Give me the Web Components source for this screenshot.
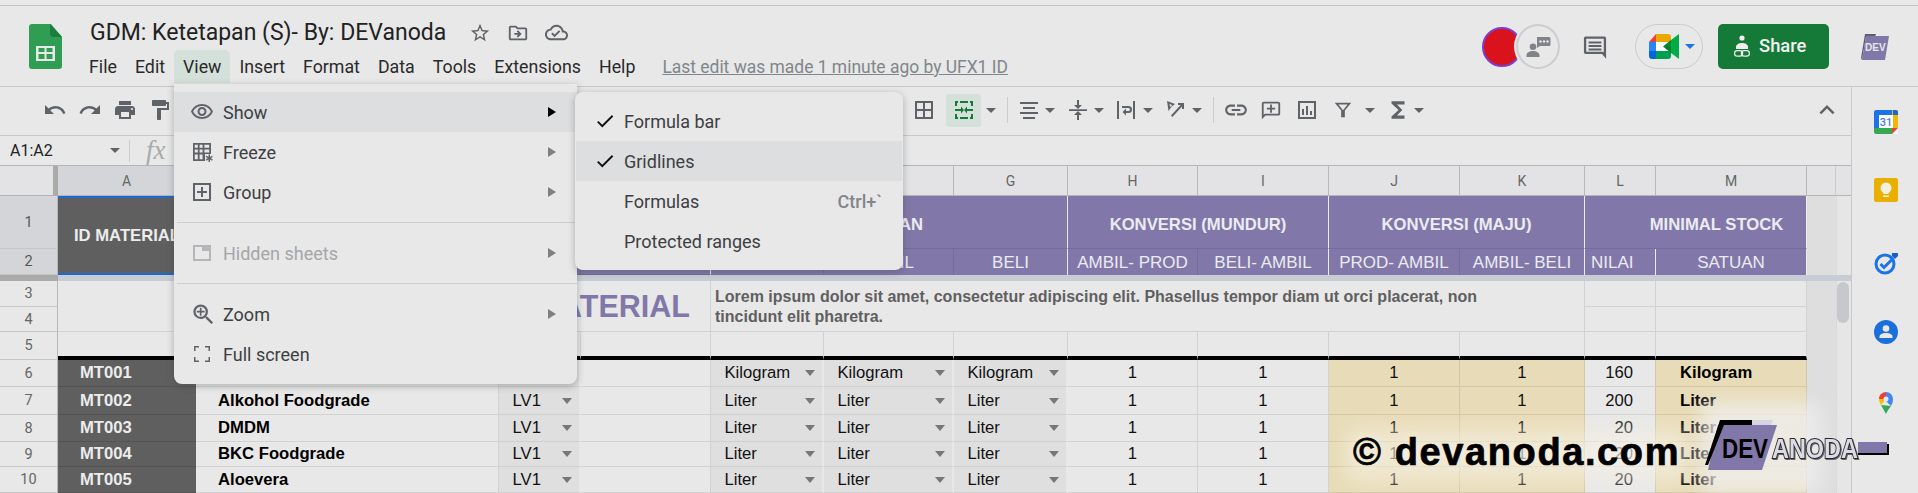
<!DOCTYPE html>
<html><head><meta charset="utf-8"><title>GDM</title>
<style>
html,body{margin:0;padding:0;background:#e8e8e8;width:1918px;height:493px;overflow:hidden;font-family:Roboto,"Liberation Sans",sans-serif}
body{position:relative}
.main{display:flex;align-items:stretch}
.col{width:1851px;display:flex;flex-direction:column}
</style></head><body>
<gs-titlebar></gs-titlebar>
<div class="main"><div class="col"><gs-toolbar></gs-toolbar><gs-formula></gs-formula><gs-sheet></gs-sheet></div><gs-side></gs-side></div>
<gs-menu id="m1" style="left:174px;top:84px;width:403px"></gs-menu>
<gs-submenu style="left:575px;top:92px;width:328px"></gs-submenu>
<gs-watermark></gs-watermark>
<script>
const P={
undo:'M12.5 8c-2.65 0-5.05.99-6.9 2.6L2 7v9h9l-3.62-3.62c1.39-1.16 3.16-1.88 5.12-1.88 3.54 0 6.55 2.31 7.6 5.5l2.37-.78C21.08 11.03 17.15 8 12.5 8z',
redo:'M18.4 10.6C16.55 8.99 14.15 8 11.5 8c-4.65 0-8.58 3.03-9.96 7.22L3.9 16c1.05-3.19 4.05-5.5 7.6-5.5 1.95 0 3.73.72 5.12 1.88L13 16h9V7l-3.6 3.6z',
print:'M19 8H5c-1.66 0-3 1.34-3 3v6h4v4h12v-4h4v-6c0-1.66-1.34-3-3-3zm-3 11H8v-5h8v5zm3-7c-.55 0-1-.45-1-1s.45-1 1-1 1 .45 1 1-.45 1-1 1zm-1-9H6v4h12V3z',
paint:'M18 4V3c0-.55-.45-1-1-1H5c-.55 0-1 .45-1 1v4c0 .55.45 1 1 1h12c.55 0 1-.45 1-1V6h1v4H9v11c0 .55.45 1 1 1h2c.55 0 1-.45 1-1v-9h8V4h-3z',
eye:'M12 6c3.79 0 7.17 2.13 8.82 5.5C19.17 14.87 15.79 17 12 17s-7.17-2.13-8.82-5.5C4.83 8.13 8.21 6 12 6m0-2C7 4 2.73 7.11 1 11.5 2.73 15.89 7 19 12 19s9.27-3.11 11-7.5C21.27 7.11 17 4 12 4zm0 5c1.38 0 2.5 1.12 2.5 2.5S13.38 14 12 14s-2.5-1.12-2.5-2.5S10.62 9 12 9m0-2c-2.48 0-4.5 2.02-4.5 4.5S9.52 16 12 16s4.5-2.02 4.5-4.5S14.48 7 12 7z',
star:'M22 9.24l-7.19-.62L12 2 9.19 8.63 2 9.24l5.46 4.73L5.82 21 12 17.27 18.18 21l-1.63-7.03L22 9.24zM12 15.4l-3.76 2.27 1-4.28-3.32-2.88 4.38-.38L12 6.1l1.71 4.04 4.38.38-3.32 2.88 1 4.28L12 15.4z',
move:'M20 6h-8l-2-2H4c-1.1 0-1.99.9-1.99 2L2 18c0 1.1.9 2 2 2h16c1.1 0 2-.9 2-2V8c0-1.1-.9-2-2-2zm0 12H4V6h5.17l2 2H20v10zM12.16 12l-1.59-1.59L12 9l4 4-4 4-1.41-1.41L12.16 14H8v-2z',
cloud:'M19.35 10.04C18.67 6.59 15.64 4 12 4 9.11 4 6.6 5.64 5.35 8.04 2.34 8.36 0 10.91 0 14c0 3.31 2.69 6 6 6h13c2.76 0 5-2.24 5-5 0-2.64-2.05-4.78-4.65-4.96zM19 18H6c-2.21 0-4-1.79-4-4 0-2.05 1.53-3.76 3.56-3.97l1.07-.11.5-.95C8.08 7.14 9.94 6 12 6c2.62 0 4.88 1.86 5.39 4.43l.3 1.5 1.53.11c1.56.1 2.78 1.41 2.78 2.96 0 1.65-1.35 3-3 3zm-9-3.82l-2.09-2.09L6.5 13.5 10 17l6.01-6.01-1.41-1.41z',
zoom:'M15.5 14h-.79l-.28-.27A6.471 6.471 0 0 0 16 9.5 6.5 6.5 0 1 0 9.5 16c1.61 0 3.09-.59 4.23-1.57l.27.28v.79l5 4.99L20.49 19l-4.99-5zm-6 0C7.01 14 5 11.99 5 9.5S7.01 5 9.5 5 14 7.01 14 9.5 11.99 14 9.5 14zM8.750 6h1.500v2.750H13v1.500h-2.750V13h-1.500v-2.750H6v-1.500h2.750z',
full:'M4 9V4h5v1.5H5.5V9zM15 4h5v5h-1.5V5.5H15zM4 15h1.5v3.5H9V20H4zM18.5 15H20v5h-5v-1.5h3.5z',
check:'M9 16.17L4.83 12l-1.42 1.41L9 19 21 7l-1.41-1.41z',
sigma:'M18 4H6v2l6.5 6L6 18v2h12v-3h-7l5-5-5-5h7z',
link:'M3.9 12c0-1.71 1.39-3.1 3.1-3.1h4V7H7c-2.76 0-5 2.24-5 5s2.24 5 5 5h4v-1.9H7c-1.71 0-3.1-1.39-3.1-3.1zM8 13h8v-2H8v2zm9-6h-4v1.9h4c1.71 0 3.1 1.39 3.1 3.1s-1.39 3.1-3.1 3.1h-4V17h4c2.76 0 5-2.24 5-5s-2.24-5-5-5z',
up:'M12 8l-6 6 1.41 1.41L12 10.83l4.59 4.58L18 14z',
grid:'M3 3v18h18V3H3zm8 16H5v-6h6v6zm0-8H5V5h6v6zm8 8h-6v-6h6v6zm0-8h-6V5h6v6z',
merge:'M3 3h3v2H5v3H3zM3 16h2v3h1v2H3zM18 3h3v5h-2V5h-1zM19 16h2v5h-3v-2h1zM8 3h8v2H8zM8 19h8v2H8zM3 11h6V8.5l3 3.5-3 3.5V13H3zM21 11h-6V8.5L12 12l3 3.5V13h6z',
align:'M3 4h18v2H3zM6 9h12v2H6zM3 14h18v2H3zM6 19h12v2H6z',
valign:'M11 2h2v5h3l-4 4-4-4h3zM3 11.2h18v1.7H3zM12 13l4 4h-3v5h-2v-5H8z',
wrap:'M3 3h2v18H3zM19 3h2v18h-2zM8 8h6.5a3.2 3.2 0 0 1 0 7H12v2.5L8.5 14 12 10.5V13h2.5a1.2 1.2 0 0 0 0-3H8z',
rotate:'M4 3l8 3-3.5 2.7L5.5 13zM6.6 5.7L7 9l2.3-1.8zM21 5v6h-2V8.4L9.4 19 8 17.6 17.6 7H15V5z',
addc:'M20 3H4a2 2 0 0 0-2 2v17l4-4h14a2 2 0 0 0 2-2V5a2 2 0 0 0-2-2zm0 13H5.2L4 17.2V5h16zM11 6h2v3.5h3.5v2H13V15h-2v-3.5H7.5v-2H11z',
chart:'M3 3h18v18H3zm2 2v14h14V5zM7 11h2v6H7zM11 8h2v9h-2zM15 13h2v4h-2z',
filter:'M3 4h18l-7 8.5V20h-4v-7.500zM7 6l5 6.200L17 6z',
comment:'M4 3h16a1.500 1.500 0 0 1 1.500 1.500V22L18 18H4a1.500 1.500 0 0 1-1.500-1.500v-12A1.500 1.500 0 0 1 4 3zm.500 2v11h14.300l.700.700V5zM6.500 7.200h11v1.800h-11zM6.500 10.200h11V12h-11zM6.500 13.200h11V15h-11z',
freeze:'M3 3h18v11h-6v7H3zM4.800 4.800v3h3v-3zM9.600 4.800v3h3v-3zM14.400 4.800v3h4.800v-3zM4.800 9.600v3h3v-3zM9.600 9.600v3h3v-3zM14.400 9.600v3h4.800v-3zM4.800 14.400v4.800h3v-4.800zM9.600 14.400v4.800h3v-4.800z',
freeze2:'M18.500 14.500h1.500v2.400l2-1.200.800 1.300-2.100 1.200 2.100 1.200-.800 1.300-2-1.200V22h-1.500v-2.500l-2 1.200-.800-1.300 2.100-1.200-2.100-1.200.800-1.300 2 1.200z',
group:'M3 3h18v18H3zm2 2v14h14V5zM11 7h2v4h4v2h-4v4h-2v-4H7v-2h4z',
hidden:'M3 4h18v16H3zm2 2v12h14v-8h-7V6z'
};
const ic=(n,s=24,c='#5f6368',extra='')=>`<svg width="${s}" height="${s}" viewBox="0 0 24 24" fill="${c}" style="display:block;flex:none;${extra}"><path fill-rule="evenodd" d="${P[n]}"/>${n==='freeze'?`<path d="${P.freeze2}"/>`:''}</svg>`;
const mk=(name,css,html)=>customElements.define(name,class extends HTMLElement{constructor(){super();const r=this.attachShadow({mode:'open'});r.innerHTML=`<style>${css}</style>${typeof html==='function'?html(this):html}`;}});

mk('gs-titlebar',`
:host{display:flex;box-sizing:border-box;height:82px;margin-top:5px;border-top:1px solid #c4c4c4;border-bottom:1px solid #c9c9c9;color:#1f1f1f;font-family:Roboto,sans-serif}
.logo{margin:18px 0 0 29px;flex:none}
.doc{margin-left:28px;width:960px;flex:none}
.t{display:flex;align-items:center;height:25px;margin-top:14px}
.t b{font-weight:400;font-size:23px;color:#222;white-space:nowrap;width:379px;flex:none}
.t svg{margin-right:16px}
.m{display:flex;align-items:center;height:33px;margin-top:5px;font-size:17.800px;color:#2a2a2a;margin-left:-10px}
.m span{padding:0 9px;height:33px;line-height:33px;white-space:nowrap;border-radius:5px 5px 0 0}
.m .on{background:#d3e1da}
.m u{margin-left:18px;color:#80868b;font-size:17.450px;white-space:nowrap}
.r{margin-left:auto;display:flex;align-items:center;padding-right:29px;height:45px;margin-top:18px}
.av{border-radius:50%;background:#d9121c;border:2px solid #7b3fd0;box-sizing:border-box;width:40px;height:40px}
.pres{margin-left:-6px;border-radius:50%;border:2px solid #ccccd2;background:#e8e8e8;box-shadow:0 0 0 2px #e8e8e8;display:flex;align-items:center;justify-content:center;box-sizing:border-box;width:44px;height:45px}
.meet{width:68px;height:45px;margin-left:26px;border:1px solid #ccc;border-radius:23px;box-sizing:border-box;display:flex;align-items:center;padding-left:13px}
.share{margin-left:15px;width:111px;height:45px;background:#157a38;border-radius:5px;color:#f1f1f1;font-size:18.400px;font-weight:500;display:flex;align-items:center;gap:9px;padding:0 0 2px 16px;box-sizing:border-box}
.dev{margin-left:32px}
`,`
<svg class="logo" width="33" height="45" viewBox="0 0 33 45"><path d="M3 0h19l11 13v29a3 3 0 0 1-3 3H3a3 3 0 0 1-3-3V3a3 3 0 0 1 3-3z" fill="#2f9e52"/><path d="M21 0l12 13H24a3 3 0 0 1-3-3z" fill="#1d7d3f"/><path fill="#e8e8e8" fill-rule="evenodd" d="M7 22h19v15H7zm2.500 2v4h6v-4zm8 0v4h6v-4zm-8 6v5h6v-5zm8 0v5h6v-5z"/></svg>
<div class="doc"><div class="t"><b>GDM: Ketetapan (S)- By: DEVanoda</b>${ic('star',22,'#5f6368')}${ic('move',22,'#5f6368')}${ic('cloud',23,'#5f6368')}</div>
<div class="m"><span>File</span><span>Edit</span><span class="on">View</span><span>Insert</span><span>Format</span><span>Data</span><span>Tools</span><span>Extensions</span><span>Help</span><u>Last edit was made 1 minute ago by UFX1 ID</u></div></div>
<div class="r"><div class="av"></div><div class="pres"><svg width="28" height="26" viewBox="0 0 28 26"><path fill="#808488" d="M9 9.500a3.300 3.300 0 1 1 0 6.600 3.300 3.300 0 0 1 0-6.600zM2.500 23v-1.500c0-3 3-4.500 6.500-4.500s6.500 1.500 6.500 4.500V23z"/><path fill="#808488" d="M13 3h12a1.500 1.500 0 0 1 1.500 1.500v6A1.500 1.500 0 0 1 25 12h-9l-3 2z"/><circle cx="16.500" cy="7.500" r="1.200" fill="#e8e8e8"/><circle cx="20" cy="7.500" r="1.200" fill="#e8e8e8"/><circle cx="23.500" cy="7.500" r="1.200" fill="#e8e8e8"/></svg></div>
<svg style="margin-left:21px" width="28" height="28" viewBox="0 0 24 24"><path fill="#5f6368" fill-rule="evenodd" d="${P.comment}"/></svg>
<div class="meet"><svg width="46" height="25" viewBox="0 0 46 25"><path fill="#2684fc" d="M0 8h7v9H0z"/><path fill="#ea4335" d="M7 0v8H0z"/><path fill="#0066da" d="M0 17h7v8H3a3 3 0 0 1-3-3z"/><path fill="#eaa800" d="M7 0h12a3 3 0 0 1 3 3v5H7z"/><path fill="#00a050" d="M7 17h15v5a3 3 0 0 1-3 3H7z"/><path fill="#fff" d="M7 8h15v9H7z"/><path fill="#00832d" d="M14 12.500l8-6.500v13z"/><path fill="#00ac47" d="M22 6l8-6v25l-8-6z"/><path fill="#1a73e8" d="M36 10h10l-5 5z"/></svg></div>
<div class="share"><svg width="16" height="22" viewBox="0 0 16 22" fill="#eee"><circle cx="8" cy="3" r="2.600"/><path d="M2 14v-2c0-2.500 3-4 6-4s6 1.500 6 4v2z"/><g fill="none" stroke="#eee" stroke-width="1.200"><rect x=".6" y="15.600" width="8" height="5.500" rx="2.700"/><rect x="7.400" y="15.600" width="8" height="5.500" rx="2.700"/></g></svg>Share</div>
<svg class="dev" width="28" height="26" viewBox="0 0 28 26"><path fill="#5f5f6a" d="M4 0h11l-1 3h-9L1 26 0 24z"/><path fill="#8178aa" d="M5 2h23l-4 24H1z"/><text x="4" y="17" font-family="Liberation Sans,sans-serif" font-weight="700" font-size="10" fill="#e8e8e8">DEV</text></svg></div>`);

const tbItems=[[924,'grid',24],[962,'merge',24,'#157a38',1],[991,'a'],[1007,'s'],[1029,'align',24],[1050,'a'],[1078,'valign',24],[1099,'a'],[1126,'wrap',24],[1148,'a'],[1175,'rotate',24],[1197,'a'],[1213,'s'],[1236,'link',26],[1271,'addc',22],[1307,'chart',24],[1343,'filter',22],[1370,'a'],[1398,'sigma',26],[1419,'a']];
const tb=()=>{let prev=43,o='';for(const it of tbItems){const [c,t,s,col,hl]=it;
 if(t==='a'){const w=10;o+=`<i class="ar" style="margin-left:${c-w/2-prev}px"></i>`;prev=c+w/2}
 else if(t==='s'){o+=`<i class="sp" style="margin-left:${c-prev}px"></i>`;prev=c+1}
 else if(hl){o+=`<span class="hl" style="margin-left:${946-prev}px">${ic(t,s,col)}</span>`;prev=981}
 else{o+=`<span style="margin-left:${c-s/2-prev}px;display:block">${ic(t,s)}</span>`;prev=c+s/2}}
 return o};
mk('gs-toolbar',`
:host{display:flex;align-items:center;height:49px;box-sizing:border-box;border-bottom:1px solid #c9c9c9;position:relative;padding-bottom:2px}
.ar{display:block;width:0;height:0;border:5px solid transparent;border-top:5px solid #5f6368;border-bottom:0;flex:none}
.sp{display:block;width:1px;height:26px;background:#ccc;flex:none}
.hl{display:flex;align-items:center;justify-content:center;width:35px;height:33px;background:#d3e1da;border-radius:3px;flex:none}
`,`<div style="display:flex;align-items:center;margin-left:43px;gap:11px;width:0">${ic('undo')}${ic('redo')}${ic('print')}${ic('paint')}</div>${tb()}<svg style="margin-left:${1812-1424}px" width="30" height="30" viewBox="0 0 24 24" fill="#5f6368"><path d="${P.up}"/></svg>`);

mk('gs-formula',`
:host{display:flex;align-items:center;height:30px;box-sizing:border-box;border-bottom:1px solid #b5b5b5;font-family:Roboto,sans-serif;font-size:16px;color:#222}
.n{width:128px;padding-left:10px;box-sizing:border-box;display:flex;justify-content:space-between;align-items:center;padding-right:8px}
.ar{width:0;height:0;border:5px solid transparent;border-top:5px solid #5f6368;border-bottom:0}
.s{width:1px;height:22px;background:#ccc;margin-left:1px}
.fx{margin-left:16px;font-family:"Liberation Serif",serif;font-style:italic;font-size:27px;color:#aaa}
`,`<div class="n">A1:A2<i class="ar"></i></div><i class="s"></i><span class="fx">fx</span>`);

const sheet=()=>{
 let h='';const c=(r,cl,rs,cs,k,t='')=>{h+=`<div class="${k}" style="grid-area:${r}/${cl}/${r+rs}/${cl+cs}">${t}</div>`};
 const L='ABCDEFGHIJKLM'.split('');
 c(1,1,1,1,'rh corner');
 L.forEach((x,i)=>c(1,i+2,1,1,'ch'+(i==0?' sel':''),x));
 c(1,15,1,1,'bar head');c(1,16,1,1,'trk head');
 [[2,1],[3,2]].forEach(([r,n])=>c(r,1,1,1,'rh sel',n));
 c(4,1,1,1,'fz dark');c(4,2,1,14,'fz');c(4,16,1,1,'fz');
 [[5,3],[6,4],[7,5],[8,6],[9,7],[10,8],[11,9],[12,10]].forEach(([r,n])=>c(r,1,1,1,'rh',n));
 c(2,2,2,1,'idm','ID MATERIAL');
 c(2,3,2,2,'pu');c(2,5,2,1,'pu gl');
 c(2,6,1,3,'pu big gl','SATUAN');c(2,9,1,2,'pu big gl','KONVERSI (MUNDUR)');c(2,11,1,2,'pu big gl','KONVERSI (MAJU)');c(2,13,1,2,'pu big gl st','MINIMAL STOCK');
 [[6,'PROD'],[7,'AMBIL'],[8,'BELI',1],[9,'AMBIL- PROD'],[10,'BELI- AMBIL',1],[11,'PROD- AMBIL'],[12,'AMBIL- BELI',1],[13,'NILAI',1],[14,'SATUAN',1]].forEach(([cl,t,g])=>c(3,cl,1,1,'pu sub'+(g?' gl':'')+(cl==13?' nl':''),t));
 c(5,2,2,4,'mat','MATERIAL');c(5,6,2,7,'lor','Lorem ipsum dolor sit amet, consectetur adipiscing elit. Phasellus tempor diam ut orci placerat, non<br>tincidunt elit pharetra.');
 c(5,13,1,1,'g');c(5,14,1,1,'g');c(6,13,1,1,'g');c(6,14,1,1,'g');
 for(let i=2;i<=14;i++)c(7,i,1,1,'g blk');
 const rows=[['MT001','','','Kilogram','Kilogram','Kilogram',160,'Kilogram'],['MT002','Alkohol Foodgrade','LV1','Liter','Liter','Liter',200,'Liter'],['MT003','DMDM','LV1','Liter','Liter','Liter',20,'Liter'],['MT004','BKC Foodgrade','LV1','Liter','Liter','Liter',20,'Liter'],['MT005','Aloevera','LV1','Liter','Liter','Liter',20,'Liter']];
 rows.forEach((d,i)=>{const r=8+i;
  c(r,2,1,1,'id',d[0]);c(r,3,1,1,'nm',d[1]);
  c(r,4,1,1,'dd',d[2]?d[2]+'<i></i>':'');c(r,5,1,1,'g');
  c(r,6,1,1,'dd',d[3]+'<i></i>');c(r,7,1,1,'dd',d[4]+'<i></i>');c(r,8,1,1,'dd',d[5]+'<i></i>');
  c(r,9,1,1,'n',1);c(r,10,1,1,'n',1);c(r,11,1,1,'n y',1);c(r,12,1,1,'n y',1);
  c(r,13,1,1,'num',d[6]);c(r,14,1,1,'nm y ms',d[7]);
 });
 for(let r=2;r<=12;r++){ if(r==4)continue; c(r,15,1,1,'bar');c(r,16,1,1,'trk');}
 return `<div class="thumb"></div><div class="wrap">${h}</div>`};
mk('gs-sheet',`
:host{display:block;position:relative;height:327px;overflow:hidden;font-family:"Liberation Sans",Arial,sans-serif;font-size:16.670px;color:#111}
.wrap{display:grid;width:1851px;grid-template-columns:58px 138px 303px 82px 130px 113px 130px 114px 130px 131px 131px 125px 71px 151px 29px 15px;grid-template-rows:30px 53px 26px 6px 26px 25px 28px 27px 28px 27px 25px 26px}
.wrap>div{box-sizing:border-box;min-width:0;white-space:nowrap}
.rh{display:flex;align-items:center;justify-content:center;background:#e8e8e8;border-right:1px solid #b8b8b8;border-bottom:1px solid #c6c6c6;color:#666;font-size:14.500px;font-family:Roboto,sans-serif}
.rh.sel{background:#d3d5d9;color:#555}
.corner{background:#e3e3e5;border-right:5px solid #aaa;border-bottom:1px solid #b5b5b5}
.ch{display:flex;align-items:center;justify-content:center;background:#e3e3e5;border-right:1px solid #b8b8b8;border-bottom:1px solid #b5b5b5;color:#666;font-size:14px;font-family:Roboto,sans-serif}
.ch.sel{background:#d3d5d9}
.fz{background:#c8ccd4}.fz.dark{background:#aaa}
.idm{background:#5f5f5f;color:#ececec;font-weight:700;display:flex;align-items:center;justify-content:center;border-top:2px solid #1a6ad3;border-bottom:2px solid #1a6ad3;overflow:visible}
.pu{background:#8178a9;color:#ebebf2;display:flex;align-items:center;justify-content:center;border-right:1px solid #756c9e;border-bottom:1px solid #756c9e}
.pu.gl{border-right:1px solid #ececec}
.big{font-weight:700;border-bottom:1px solid #756c9e;padding-top:5px}
.big.st{padding-left:42px}
.sub{font-size:17px;border-bottom:0;padding-top:2px}
.sub.nl{justify-content:flex-start;padding-left:6px}
.mat{display:flex;align-items:center;justify-content:flex-end;font-size:30.500px;font-weight:700;color:#8178a9;border-right:1px solid #d2d2d2;border-bottom:1px solid #d2d2d2;padding-right:20px}
.lor{font-weight:700;color:#5f5f5f;font-size:16px;line-height:20px;padding:6px 0 0 4px;border-right:1px solid #d2d2d2;border-bottom:1px solid #d2d2d2}
.g{border-right:1px solid #d2d2d2;border-bottom:1px solid #d2d2d2}
.blk{border-bottom:4px solid #000}
.id{background:#5f5f5f;color:#ececec;font-weight:700;padding-left:22px;display:flex;align-items:center;border-bottom:1px solid #545454}
.nm{font-weight:700;color:#000;padding-left:22px;display:flex;align-items:center;border-right:1px solid #d2d2d2;border-bottom:1px solid #d2d2d2}
.ms{padding-left:24px}
.dd{background:#dfdfdf;padding-left:13.500px;display:flex;align-items:center;justify-content:space-between;padding-right:7px;border-right:2px solid #e8e8e8;border-bottom:1px solid #cfcfcf;color:#111}
.dd i{width:0;height:0;border:5px solid transparent;border-top:6px solid #777;border-bottom:0}
.n{display:flex;align-items:center;justify-content:center;border-right:1px solid #d2d2d2;border-bottom:1px solid #d2d2d2;color:#111}
.y{background:#e8dcb8;border-right-color:#d3c8a6;border-bottom-color:#d3c8a6}
.num{display:flex;align-items:center;justify-content:flex-end;padding-right:22px;border-right:1px solid #d2c8a8;border-bottom:1px solid #d2d2d2;color:#111}
.bar{background:#dedede}.bar.head{background:#e3e3e5;border-bottom:1px solid #b5b5b5;border-right:1px solid #ccc}
.trk{background:#e6e6e6;border-left:1px solid #dadada}.trk.head{background:#e3e3e5;border-bottom:1px solid #b5b5b5;border-left:0}
.thumb{position:absolute;left:1837px;top:116px;width:12px;height:41px;border-radius:6px;background:#c6c8cc;z-index:2}
`,sheet);

const side=[[24,`<svg width="24" height="24" viewBox="0 0 24 24"><rect width="24" height="24" rx="2" fill="#fff"/><path fill="#1a73e8" d="M2 0h16v5H5v13H0V2a2 2 0 0 1 2-2z"/><path fill="#f2b60b" d="M18 0h4a2 2 0 0 1 2 2v16h-5V5h-1z"/><path fill="#34a853" d="M0 18h18v6H2a2 2 0 0 1-2-2z"/><path fill="#1967d2" d="M19 0h3a2 2 0 0 1 2 2v3h-5z"/><path fill="#ea4335" d="M18 24v-6h6z"/><text x="12" y="15.500" text-anchor="middle" font-family="Roboto,sans-serif" font-weight="500" font-size="11" fill="#4a7fdb">31</text></svg>`],
[44,`<svg width="24" height="24" viewBox="0 0 24 24"><rect width="24" height="24" rx="2" fill="#eab000"/><circle cx="12" cy="10" r="5.500" fill="#f4f0e0"/><path fill="#f4f0e0" d="M9.500 13h5v3h-5zM9 17.500h6V19H9z"/></svg>`],
[49,`<svg width="24" height="24" viewBox="0 0 24 24"><circle cx="11" cy="13" r="9" fill="none" stroke="#1a73e8" stroke-width="3"/><path fill="none" stroke="#1a73e8" stroke-width="3" d="M6.500 13l3.500 3.500 9-9"/><path fill="#1a5fc8" d="M18 2h6v3l-3 3-3-3z"/></svg>`],
[45,`<svg width="24" height="24" viewBox="0 0 24 24"><circle cx="12" cy="12" r="12" fill="#1a6fdc"/><circle cx="12" cy="8.500" r="3.300" fill="#e8e8e8"/><path fill="#e8e8e8" d="M5.500 18v-1.500c0-2 3-3.500 6.500-3.500s6.500 1.500 6.500 3.500V18z"/></svg>`],
[46,`<svg width="24" height="24" viewBox="0 0 24 24"><path fill="#34a853" d="M7 15l5 9c1-3 3-5 5-8z"/><path fill="#fbbc04" d="M5 9c0 2 1 4 2 6l5-6z"/><path fill="#ea4335" d="M6 5a8 8 0 0 1 6-3v5a2 2 0 0 0-2 2l-5 0a7 7 0 0 1 1-4z"/><path fill="#4285f4" d="M12 2a7 7 0 0 1 7 7c0 3-1 5-2 7l-7-7h4a2 2 0 0 0-2-2z"/><circle cx="12" cy="9" r="2.500" fill="#e8e8e8"/></svg>`]];
mk('gs-side',`:host{flex:none;width:67px;box-sizing:border-box;border-left:1px solid #c9c9c9;display:flex;flex-direction:column;align-items:center;padding-top:23px;height:406px}
div{height:24px;margin-left:-1px}`,side.map(([m,s],i)=>`<div style="margin-top:${i?m:0}px;width:24px;transform:translateX(1px)">${s}</div>`).join(''));

const MC=`:host{position:absolute;display:block;box-sizing:border-box;background:#e8e8e8;border-radius:0 0 8px 8px;box-shadow:0 2px 6px 1px rgba(60,64,67,.28);font-family:Roboto,sans-serif;font-size:18px;color:#3c4043;z-index:5}
.it{display:flex;align-items:center;height:40px;white-space:nowrap}
.it.on{background:#dddee0}
.dis{color:#a4a6a9}
.t{flex:1;padding-top:1px}
.ar{width:0;height:0;border:5px solid transparent;border-left:8px solid #808080;border-right:0;margin-right:21px}
.it.on .ar{border-left-color:#000}
`;
const row=(icn,t,on,dis,sz=24)=>`<div class="it ${on?'on':''} ${dis?'dis':''}"><span style="width:49px;display:flex;padding-left:16px;box-sizing:border-box">${ic(icn,sz,dis?'#b4b6b9':'#5f6368')}</span><span class="t">${t}</span><i class="ar"></i></div>`;
mk('gs-menu',MC+`:host{padding:8px 0 10px 0}.sep{height:1px;background:#cfcfcf;margin:10px 0 10px 3px}`,
`${row('eye','Show',1)}${row('freeze','Freeze')}${row('group','Group')}<div class="sep"></div>${row('hidden','Hidden sheets',0,1)}<div class="sep"></div>${row('zoom','Zoom',0,0,27)}<div class="it"><span style="width:49px;display:flex;padding-left:16px;box-sizing:border-box">${ic('full',24)}</span><span class="t">Full screen</span></div>`);
mk('gs-submenu',MC+`:host{padding:9px 1px 8px;border-radius:8px;z-index:6;height:178px}.s{color:#80868b;font-weight:500;margin-right:20px}.k{width:48px;display:flex;padding-left:18px;box-sizing:border-box}`,
`<div class="it"><span class="k">${ic('check',22,'#111')}</span><span class="t">Formula bar</span></div><div class="it on"><span class="k">${ic('check',22,'#111')}</span><span class="t">Gridlines</span></div><div class="it"><span class="k"></span><span class="t">Formulas</span><span class="s">Ctrl+\`</span></div><div class="it"><span class="k"></span><span class="t">Protected ranges</span></div>`);

mk('gs-watermark',`:host{position:absolute;left:0;top:0;width:1918px;height:493px;overflow:hidden;display:block;pointer-events:none;z-index:8}
.blob{position:absolute;background:rgba(238,238,238,.78);filter:blur(9px);border-radius:14px}
.txt{position:absolute;left:1353px;top:428px;font:700 38px/48px "Liberation Sans",Arial,sans-serif;letter-spacing:1.600px;color:#000;white-space:nowrap;-webkit-text-stroke:.7px #000;text-shadow:0 0 14px rgba(255,255,255,.55)}
svg{position:absolute;left:1700px;top:420px}
.an{filter:drop-shadow(1px 1px 0 #666)}
`,`<div class="blob" style="left:1345px;top:428px;width:345px;height:55px;background:rgba(245,240,225,.55)"></div><div class="blob" style="left:1700px;top:402px;width:122px;height:92px"></div><div class="txt">© devanoda.com</div>
<svg width="200" height="56" viewBox="0 0 200 56"><path fill="#d6d4e0" d="M52 0h21l-2 5H52z"/><path fill="#8178a9" d="M18 5h59L62 50H8z"/><path fill="#000" d="M20 0h32v5H24L8 45H5z"/><path fill="#000" d="M160 24h29v11h-31v-2h29z"/><path fill="#8178a9" d="M158 22h29v11h-29z"/><text x="22" y="38" font-family="Liberation Sans,sans-serif" font-weight="700" font-size="28" textLength="46" lengthAdjust="spacingAndGlyphs" fill="#000">DEV</text><text class="an" x="72" y="38" font-family="Liberation Sans,sans-serif" font-weight="700" font-size="28" textLength="86" lengthAdjust="spacingAndGlyphs" fill="#dcdae6" stroke="#2a2a2a" stroke-width="2" paint-order="stroke">ANODA</text></svg>`);
</script>
</body></html>
